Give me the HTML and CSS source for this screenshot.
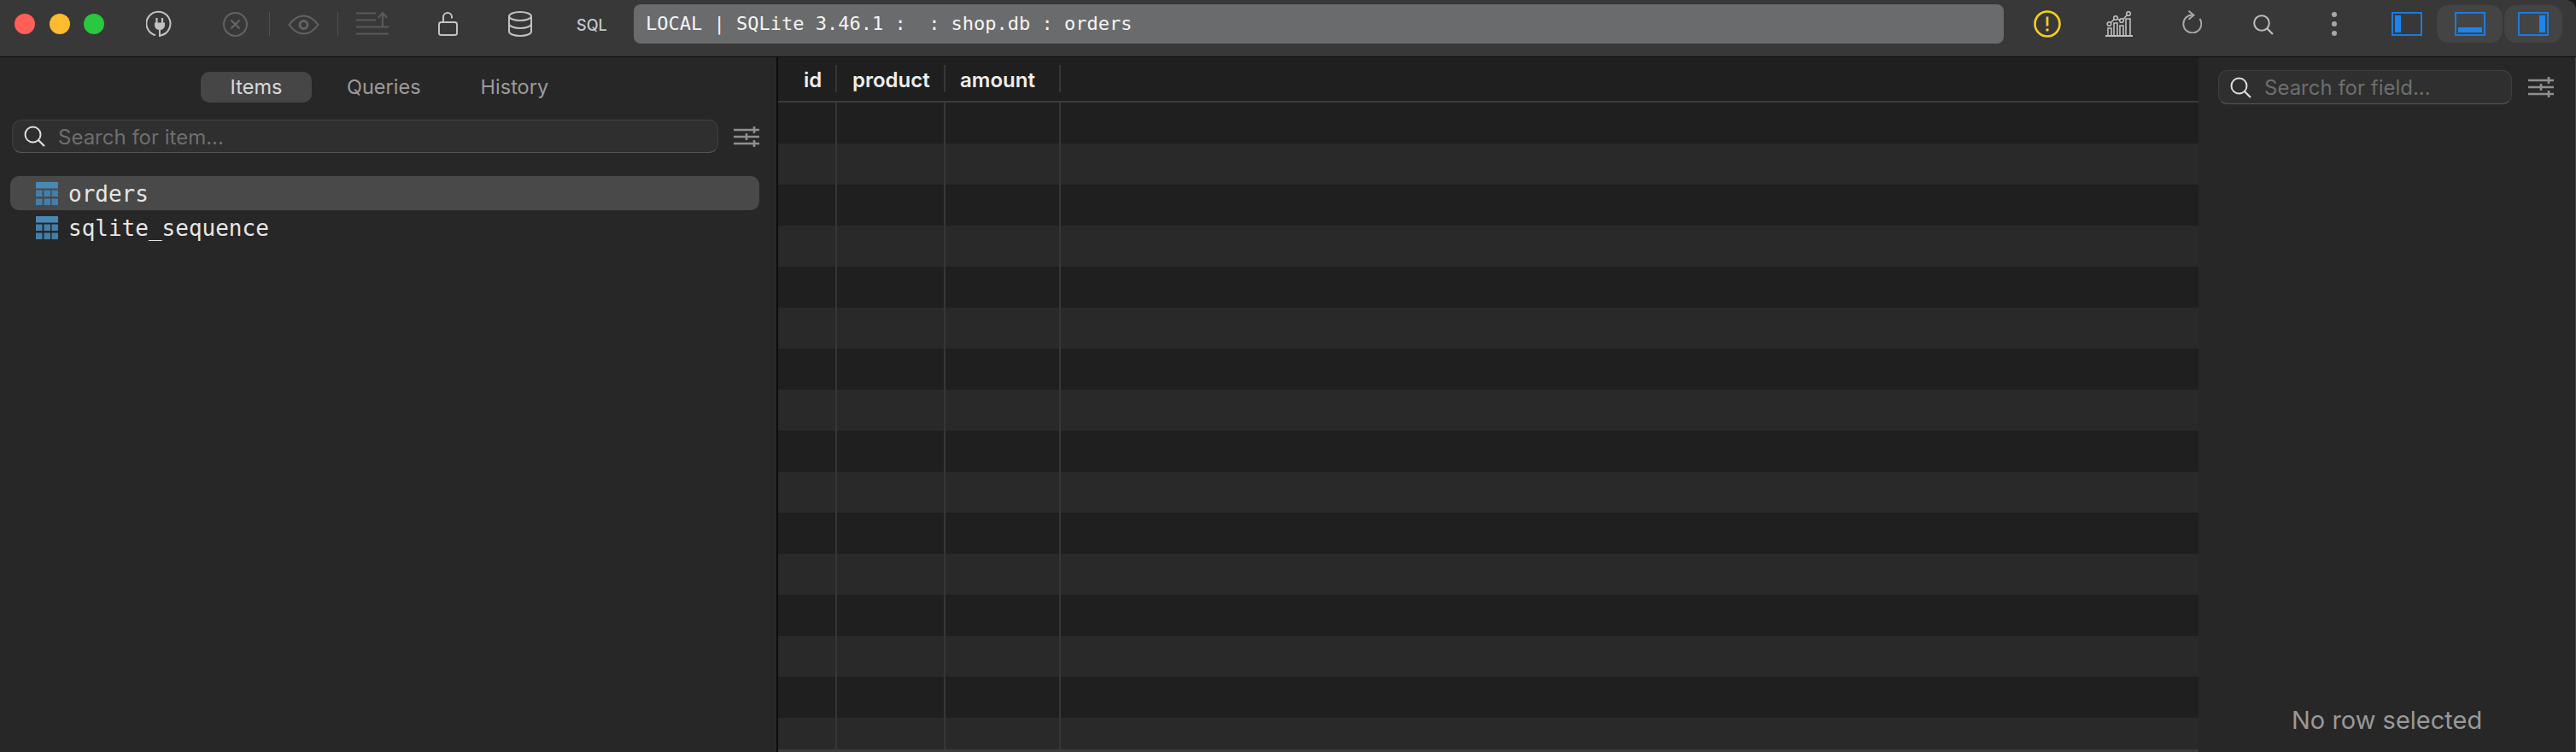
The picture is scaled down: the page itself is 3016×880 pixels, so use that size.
FILE: index.html
```html
<!DOCTYPE html>
<html lang="en">
<head>
<meta charset="utf-8">
<title>TablePlus</title>
<link rel="stylesheet" href="styles.css">
</head>
<body>
<div class="window">
  <header class="toolbar">
    <div class="lights"><span class="light red"></span><span class="light yellow"></span><span class="light green"></span></div>
    <svg class="ico plug" width="31" height="31" viewBox="0 0 31 31"><path d="M11 29.200A14 14 0 1 1 17 29.400" fill="none" stroke="#c2c2c2" stroke-width="2"/><path d="M12.500 9v6M19 9v6" stroke="#c2c2c2" stroke-width="2.200" fill="none"/><path d="M10 14.500h12v3.500a6 6 0 0 1-5 5V31h-2v-8a6 6 0 0 1-5-5z" fill="#c2c2c2"/></svg>
    <svg class="ico cancel" width="29" height="29" viewBox="0 0 29 29"><circle cx="14.500" cy="14.500" r="13.500" fill="none" stroke="#636363" stroke-width="2"/><path d="M9.500 9.500l10 10M19.500 9.500l-10 10" stroke="#666" stroke-width="2" fill="none"/></svg>
    <span class="sep sep-a"></span>
    <svg class="ico eye" width="37" height="24" viewBox="0 0 37 24"><path d="M1.500 12C7 4.500 12 1.500 18.500 1.500S30 4.500 35.500 12C30 19.500 25 22.500 18.500 22.500S7 19.500 1.500 12z" fill="none" stroke="#636363" stroke-width="2"/><circle cx="18.500" cy="12" r="4.500" fill="none" stroke="#636363" stroke-width="3"/></svg>
    <span class="sep sep-b"></span>
    <svg class="ico list" width="38" height="27" viewBox="0 0 38 27"><path d="M0 1.500h23M0 9.500h23M0 17.500h38M0 25.500h38M31 18V2M26 7l5-6 5 6" fill="none" stroke="#5a5a5a" stroke-width="2"/></svg>
    <svg class="ico lock" width="23" height="28" viewBox="0 0 23 28"><rect x="1" y="12" width="21" height="15" rx="2.500" fill="none" stroke="#c2c2c2" stroke-width="2"/><path d="M6 12V6a5 5 0 0 1 10 0v1.500" fill="none" stroke="#c2c2c2" stroke-width="2"/></svg>
    <svg class="ico db" width="28" height="30" viewBox="0 0 28 30"><g fill="none" stroke="#c2c2c2" stroke-width="2"><ellipse cx="14" cy="6" rx="13" ry="5"/><path d="M1 6v18c0 2.800 5.800 5 13 5s13-2.200 13-5V6M1 15c0 2.800 5.800 5 13 5s13-2.200 13-5"/></g></svg>
    <span class="sql">SQL</span>
    <div class="address">LOCAL | SQLite 3.46.1 :  : shop.db : orders</div>
    <svg class="ico warn" width="32" height="32" viewBox="0 0 32 32"><circle cx="16" cy="16" r="14.500" fill="none" stroke="#f5cd1e" stroke-width="2.600"/><path d="M16 7.500v11" stroke="#f5cd1e" stroke-width="2.800"/><circle cx="16" cy="23" r="1.800" fill="#f5cd1e"/></svg>
    <svg class="ico chart" width="32" height="30" viewBox="0 0 32 30"><g fill="none" stroke="#bdbdbd" stroke-width="1.600"><path d="M0 29h32" stroke-width="2"/><path d="M3 28v-8h4v8M10 28V14h4v14M17 28V17h4v11M24 28V9h5v19"/><circle cx="4.500" cy="15" r="2.300"/><circle cx="12" cy="8" r="2.300"/><circle cx="19" cy="11" r="2.300"/><circle cx="27" cy="3" r="2.300"/><path d="M6.300 13.500l4-4M14 9l3 1.500M21 9.500l4.300-5"/></g></svg>
    <svg class="ico refresh" width="24" height="27" viewBox="0 0 24 27"><path d="M14 5.500A10.500 10.500 0 1 0 21.500 10" fill="none" stroke="#a8a8a8" stroke-width="2"/><path d="M8.500 0.800l6 5-6 5" fill="none" stroke="#a8a8a8" stroke-width="2"/></svg>
    <svg class="ico find" width="24" height="24" viewBox="0 0 24 24"><circle cx="10" cy="10" r="8.800" fill="none" stroke="#bdbdbd" stroke-width="2"/><path d="M16 16l7 7" stroke="#bdbdbd" stroke-width="2.200"/></svg>
    <svg class="ico dots" width="6" height="28" viewBox="0 0 6 28"><circle cx="3" cy="3" r="3" fill="#a8a8a8"/><circle cx="3" cy="14" r="3" fill="#a8a8a8"/><circle cx="3" cy="25" r="3" fill="#a8a8a8"/></svg>
    <div class="panel-btn first"><svg width="36" height="28" viewBox="0 0 36 28"><rect x="1" y="1" width="34" height="26" fill="none" stroke="#1a7be0" stroke-width="2"/><rect x="4" y="4" width="7" height="20" fill="#1a85f0"/></svg></div>
    <div class="panel-btn on"><svg width="36" height="28" viewBox="0 0 36 28"><rect x="1" y="1" width="34" height="26" fill="none" stroke="#1a7be0" stroke-width="2"/><rect x="4" y="18" width="28" height="6" fill="#1a85f0"/></svg></div>
    <div class="panel-btn on third"><svg width="36" height="28" viewBox="0 0 36 28"><rect x="1" y="1" width="34" height="26" fill="none" stroke="#1a7be0" stroke-width="2"/><rect x="25" y="4" width="7" height="20" fill="#1a85f0"/></svg></div>
  </header>
  <div class="content">
    <aside class="sidebar">
      <nav class="tabs"><span class="tab active">Items</span><span class="tab queries">Queries</span><span class="tab history">History</span></nav>
      <div class="search-row">
        <div class="search wide">
          <svg class="search-ico" width="25" height="25" viewBox="0 0 25 25"><circle cx="10.500" cy="10.500" r="9" fill="none" stroke="#dedede" stroke-width="2"/><path d="M17 17l7 7" stroke="#dedede" stroke-width="2.200"/></svg>
          <span class="placeholder">Search for item...</span>
        </div>
        <svg class="filter" width="30" height="26" viewBox="0 0 30 26"><g stroke="#8f8f8f" stroke-width="2.400" fill="none"><path d="M0 5h30M0 13h30M0 21h30"/><path d="M24 1v8M15 9v8M24 17v8" stroke-width="2.600"/></g></svg>
      </div>
      <ul class="items">
        <li class="item selected"><svg class="tbl" width="26" height="27" viewBox="0 0 26 27"><rect width="26" height="7.500" fill="#4a88b4"/><g fill="#437fa9"><rect y="9.500" width="7.500" height="7.500"/><rect x="9.500" y="9.500" width="7.500" height="7.500"/><rect x="18.500" y="9.500" width="7.500" height="7.500"/><rect y="19.500" width="7.500" height="7.500"/><rect x="9.500" y="19.500" width="7.500" height="7.500"/><rect x="18.500" y="19.500" width="7.500" height="7.500"/></g></svg><span>orders</span></li>
        <li class="item"><svg class="tbl" width="26" height="27" viewBox="0 0 26 27"><rect width="26" height="7.500" fill="#4a88b4"/><g fill="#437fa9"><rect y="9.500" width="7.500" height="7.500"/><rect x="9.500" y="9.500" width="7.500" height="7.500"/><rect x="18.500" y="9.500" width="7.500" height="7.500"/><rect y="19.500" width="7.500" height="7.500"/><rect x="9.500" y="19.500" width="7.500" height="7.500"/><rect x="18.500" y="19.500" width="7.500" height="7.500"/></g></svg><span>sqlite_sequence</span></li>
      </ul>
    </aside>
    <main class="table">
      <div class="thead">
        <div class="th c1"><span>id</span></div>
        <div class="th c2"><span>product</span></div>
        <div class="th c3"><span>amount</span></div>
      </div>
      <div class="row"><i class="c1"></i><i class="c2"></i><i class="c3"></i></div>
      <div class="row"><i class="c1"></i><i class="c2"></i><i class="c3"></i></div>
      <div class="row"><i class="c1"></i><i class="c2"></i><i class="c3"></i></div>
      <div class="row"><i class="c1"></i><i class="c2"></i><i class="c3"></i></div>
      <div class="row"><i class="c1"></i><i class="c2"></i><i class="c3"></i></div>
      <div class="row"><i class="c1"></i><i class="c2"></i><i class="c3"></i></div>
      <div class="row"><i class="c1"></i><i class="c2"></i><i class="c3"></i></div>
      <div class="row"><i class="c1"></i><i class="c2"></i><i class="c3"></i></div>
      <div class="row"><i class="c1"></i><i class="c2"></i><i class="c3"></i></div>
      <div class="row"><i class="c1"></i><i class="c2"></i><i class="c3"></i></div>
      <div class="row"><i class="c1"></i><i class="c2"></i><i class="c3"></i></div>
      <div class="row"><i class="c1"></i><i class="c2"></i><i class="c3"></i></div>
      <div class="row"><i class="c1"></i><i class="c2"></i><i class="c3"></i></div>
      <div class="row"><i class="c1"></i><i class="c2"></i><i class="c3"></i></div>
      <div class="row"><i class="c1"></i><i class="c2"></i><i class="c3"></i></div>
      <div class="row"><i class="c1"></i><i class="c2"></i><i class="c3"></i></div>
    </main>
    <aside class="details">
      <div class="search-row details-search">
        <div class="search narrow">
          <svg class="search-ico" width="25" height="25" viewBox="0 0 25 25"><circle cx="10.500" cy="10.500" r="9" fill="none" stroke="#dedede" stroke-width="2"/><path d="M17 17l7 7" stroke="#dedede" stroke-width="2.200"/></svg>
          <span class="placeholder">Search for field...</span>
        </div>
        <svg class="filter" width="30" height="26" viewBox="0 0 30 26"><g stroke="#8f8f8f" stroke-width="2.400" fill="none"><path d="M0 5h30M0 13h30M0 21h30"/><path d="M24 1v8M15 9v8M24 17v8" stroke-width="2.600"/></g></svg>
      </div>
      <p class="no-row">No row selected</p>
    </aside>
  </div>
</div>
</body>
</html>
```
FILE: styles.css
```css
* { box-sizing: border-box; }
html, body { margin: 0; padding: 0; height: 880px; overflow: hidden; background: #1a1a1a; }
body { font-family: Inter, "Liberation Sans", sans-serif; }
.window { width: 3016px; height: 880px; display: flex; flex-direction: column; overflow: hidden; }

/* toolbar */
.toolbar { height: 67px; flex: none; display: flex; align-items: flex-start; background: #383838; border-bottom: 1.500px solid #0b0b0b; border-top-right-radius: 12px; }
.ico { display: block; flex: none; }
.lights { display: flex; gap: 16.500px; margin: 16px 0 0 17px; }
.light { width: 24px; height: 24px; border-radius: 50%; display: block; }
.red { background: #fe5f57; }
.yellow { background: #febb2e; }
.green { background: #28c83f; }
.plug { margin: 12px 0 0 49px; }
.cancel { margin: 14px 0 0 59px; }
.sep { width: 1px; height: 28px; background: #505050; margin-top: 14px; flex: none; }
.sep-a { margin-left: 25px; }
.eye { margin: 17px 0 0 21px; }
.sep-b { margin-left: 21px; }
.list { margin: 14px 0 0 21px; }
.lock { margin: 14px 0 0 58px; }
.db { margin: 13px 0 0 59px; }
.sql { margin: 19px 0 0 52px; font-size: 18px; line-height: 21px; font-weight: 500; color: #c8c8c8; width: 36px; flex: none; }
.address { width: 1604px; height: 46px; margin: 5px 0 0 31px; flex: none; padding-left: 14px; background: #6a6b6d; border-radius: 8px; color: #f4f4f4; font: 22px/46px "DejaVu Sans Mono", monospace; white-space: pre; }
.warn { margin: 12px 0 0 35px; }
.chart { margin: 13px 0 0 52px; }
.refresh { margin: 12px 0 0 57px; }
.find { margin: 17px 0 0 60px; }
.dots { margin: 14px 0 0 68px; }
.panel-btn { flex: none; height: 44px; margin-top: 6px; border-radius: 14px; display: flex; align-items: center; justify-content: center; }
.panel-btn.first { width: 36px; margin-left: 64px; }
.panel-btn.on { width: 77px; background: #444; }
.panel-btn.first + .on { margin-left: 17px; }
.panel-btn.third { width: 68px; margin-left: 2px; }

/* layout */
.content { flex: 1; min-height: 0; display: flex; }
.sidebar { width: 911px; flex: none; background: #272727; border-right: 2px solid #0c0c0c; }
.tabs { display: flex; align-items: center; height: 36px; margin: 17px 0 0 235px; }
.tab { font-size: 23.500px; line-height: 36px; color: #9b9b9b; }
.tab.active { width: 130px; height: 36px; text-align: center; background: #464646; border-radius: 10px; color: #d9d9d9; }
.tab.queries { margin-left: 41px; }
.tab.history { margin-left: 70px; }

.search-row { display: flex; align-items: center; }
.sidebar .search-row { margin: 20px 0 0 14px; }
.search { height: 39px; display: flex; align-items: center; background: #2f2f2f; border: 1.500px solid #3f3f3f; border-bottom-color: #555; border-radius: 11px; flex: none; }
.search.wide { width: 827px; padding-left: 13px; }
.search.narrow { width: 344px; height: 40px; padding-left: 13px; }
.search-ico { flex: none; }
.placeholder { font-size: 24px; line-height: 38px; padding-top: 2px; color: #6e6e6e; margin-left: 15px; white-space: nowrap; }
.filter { flex: none; margin-left: 18px; display: block; }

.items { list-style: none; margin: 27px 0 0 12px; padding: 0; width: 877px; }
.item { height: 40px; display: flex; align-items: center; padding-left: 30px; border-radius: 10px; color: #e6e6e6; font: 26px/40px "DejaVu Sans Mono", monospace; }
.item span { margin-top: 1px; }
.item.selected { background: #494949; }
.tbl { display: block; flex: none; margin-right: 12px; }

/* table */
.table { width: 1663px; height: 813px; flex: none; overflow: hidden; background: #1f1f1f; border-bottom: 3px solid #3b3b3b; }
.thead { display: flex; height: 53px; align-items: flex-start; border-bottom: 2px solid #3b3b3b; background: #1f1f1f; }
.th { height: 32px; margin-top: 9px; border-right: 2px solid #363636; font-size: 24px; line-height: 36px; font-weight: 600; color: #eee; padding-left: 18px; }
.th.c1 { padding-left: 30px; }
.th.c3 { padding-left: 17px; }
.c1 { width: 69px; }
.c2 { width: 127px; }
.c3 { width: 135px; }
.row { display: flex; height: 48px; background: #1f1f1f; }
.row:nth-child(odd) { background: #292929; }
.row i { display: block; height: 48px; border-right: 2px solid #363636; }

/* details */
.details { flex: 1; background: #272727; border-right: 1px solid #4a4a4a; display: flex; flex-direction: column; }
.details-search { margin: 15px 0 0 23px; }
.details-search .filter { margin-left: 19px; }
.no-row { margin: auto 0 0; height: 56px; padding-left: 109px; font-size: 29px; line-height: 38px; color: #999; white-space: nowrap; }
```
